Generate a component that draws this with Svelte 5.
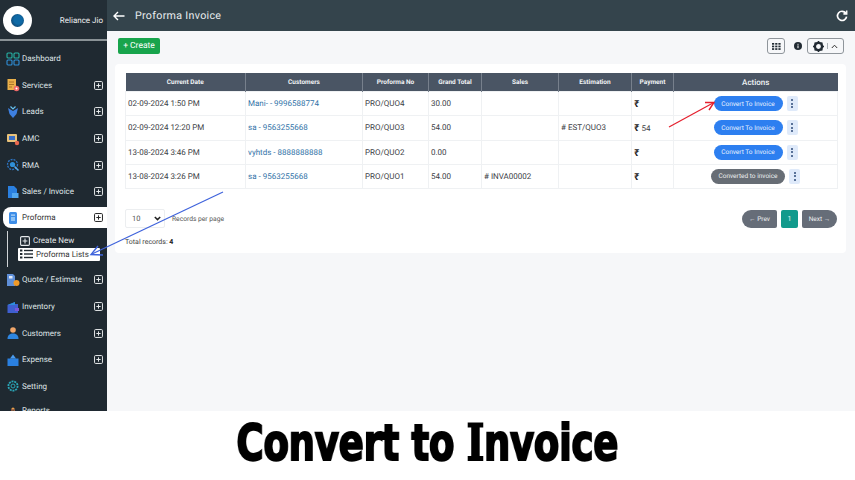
<script>
  const menu = [
    { name: 'Dashboard', icon: 'dash' },
    { name: 'Services', icon: 'services', plus: true },
    { name: 'Leads', icon: 'leads', plus: true },
    { name: 'AMC', icon: 'amc', plus: true },
    { name: 'RMA', icon: 'rma', plus: true },
    { name: 'Sales / Invoice', icon: 'sales', plus: true },
    { name: 'Proforma', icon: 'proforma', plus: true, active: true },
    { name: 'Quote / Estimate', icon: 'quote', plus: true },
    { name: 'Inventory', icon: 'inventory', plus: true },
    { name: 'Customers', icon: 'customers', plus: true },
    { name: 'Expense', icon: 'expense', plus: true },
    { name: 'Setting', icon: 'setting' },
    { name: 'Reports', icon: 'reports' }
  ];

  const cols = ['Current Date', 'Customers', 'Proforma No', 'Grand Total', 'Sales', 'Estimation', 'Payment', 'Actions'];

  const rows = [
    { date: '02-09-2024 1:50 PM', customer: 'Mani- - 9996588774', no: 'PRO/QUO4', total: '30.00', sales: '', est: '', pay: '' },
    { date: '02-09-2024 12:20 PM', customer: 'sa - 9563255668', no: 'PRO/QUO3', total: '54.00', sales: '', est: '# EST/QUO3', pay: '54' },
    { date: '13-08-2024 3:46 PM', customer: 'vyhtds - 8888888888', no: 'PRO/QUO2', total: '0.00', sales: '', est: '', pay: '' },
    { date: '13-08-2024 3:26 PM', customer: 'sa - 9563255668', no: 'PRO/QUO1', total: '54.00', sales: '# INVA00002', est: '', pay: '', done: true }
  ];
</script>

{#snippet plusBox(size)}
  <svg class="plus" width={size} height={size} viewBox="0 0 10 10" fill="none" stroke="currentColor">
    <rect x="0.6" y="0.6" width="8.8" height="8.8" rx="1.2" stroke-width="1.1" />
    <path d="M5 2.6v4.8M2.6 5h4.8" stroke-width="1.1" />
  </svg>
{/snippet}

{#snippet menuIcon(kind)}
  <svg class="micon" width="14" height="14" viewBox="0 0 14 14" fill="none">
    {#if kind === 'dash'}
      <g stroke="#27b3a6" stroke-width="1.1">
        <rect x="1" y="1" width="5" height="5" rx="1" />
        <rect x="8" y="1" width="5" height="5" rx="1" />
        <rect x="1" y="8" width="5" height="5" rx="1" stroke="#2f8fd8" />
        <rect x="8" y="8" width="5" height="5" rx="1" stroke="#2f8fd8" />
      </g>
    {:else if kind === 'services'}
      <rect x="1.5" y="1" width="8.5" height="11" fill="#e9b04a" />
      <path d="M3 4h5M3 6.5h5M3 9h3" stroke="#a8742a" />
      <circle cx="10.5" cy="10.5" r="2.8" fill="#ee6a6a" />
      <circle cx="10.5" cy="10.5" r="1" fill="#fff" />
    {:else if kind === 'leads'}
      <path d="M2 3l5 3 5-3-1.5 6L7 13 3.5 9z" fill="#3d7fe0" />
      <path d="M4.5 1.5L7 4l2.5-2.5" stroke="#67c1f0" stroke-width="1.2" />
    {:else if kind === 'amc'}
      <rect x="1" y="2" width="10" height="8" rx="1" fill="#e8c27a" />
      <rect x="3" y="4" width="6" height="4" fill="#3a70c8" />
      <circle cx="11" cy="11" r="2.2" fill="#e8684f" />
    {:else if kind === 'rma'}
      <circle cx="6.5" cy="6.5" r="5" stroke="#2d75c4" stroke-width="1.3" stroke-dasharray="2 1" />
      <circle cx="6.5" cy="6.5" r="2.6" fill="#2f8fd8" />
      <path d="M8.5 8.5l4 4" stroke="#5aa9ea" stroke-width="1.6" />
    {:else if kind === 'sales'}
      <path d="M2 1h6l3 3v9H2z" fill="#2a80e0" />
      <rect x="6" y="8" width="6.5" height="5" fill="#52a8f0" />
    {:else if kind === 'proforma'}
      <rect x="3" y="1" width="8" height="12" rx="1.5" fill="#3e8ee8" />
      <rect x="5" y="3.5" width="4" height="1.2" fill="#bcdcf8" />
      <rect x="5" y="6" width="4" height="4" fill="#8ec2f4" />
    {:else if kind === 'quote'}
      <path d="M1 1h6l2 2v10H1z" fill="#5f8fd8" />
      <rect x="3" y="3" width="3.5" height="2.5" fill="#dfe9f8" />
      <circle cx="10.5" cy="10" r="3" fill="#f09a28" />
    {:else if kind === 'inventory'}
      <path d="M1.5 5L9 2v2h3v9H1.5z" fill="#3f5fd0" />
      <path d="M1.5 5L9 2v3z" fill="#2c8ed8" />
      <rect x="9" y="8" width="4" height="3" fill="#7a56d8" />
    {:else if kind === 'customers'}
      <circle cx="7" cy="4" r="2.8" fill="#f0a66a" />
      <path d="M1.5 13c0-4 2.5-5.500 5.500-5.500s5.500 1.500 5.500 5.500z" fill="#2f86e0" />
    {:else if kind === 'expense'}
      <path d="M1.5 5.500h11V13h-11z" fill="#2a80e0" />
      <path d="M4 5.500L7 1.500l3 4z" fill="#4a9cf0" />
    {:else if kind === 'setting'}
      <circle cx="7" cy="7" r="4.6" stroke="#2aa7b8" stroke-width="1.8" stroke-dasharray="2 0.8" />
      <circle cx="7" cy="7" r="2" stroke="#2aa7b8" stroke-width="1" />
    {:else}
      <circle cx="3" cy="10" r="1.6" fill="#e8734a" />
      <circle cx="7" cy="5" r="1.6" fill="#e8a04a" />
      <circle cx="11" cy="9" r="1.6" fill="#d8504a" />
      <path d="M3 10l4-5 4 4" stroke="#a8604a" />
    {/if}
  </svg>
{/snippet}

<div class="frame">
  <div class="app">
    <aside class="side">
      <div class="brand">
        <div class="logo"><span class="logo-dot"></span></div>
        <span class="brand-name">Reliance Jio</span>
      </div>
      <nav class="menu">
        {#each menu as item}
          <div class="item" class:active={item.active}>
            {@render menuIcon(item.icon)}
            <span class="label">{item.name}</span>
            {#if item.plus}{@render plusBox(9)}{/if}
          </div>
          {#if item.active}
            <div class="sub">
              <div class="sub-row">
                {@render plusBox(10)}
                <span>Create New</span>
              </div>
              <div class="sub-row current">
                <svg width="13" height="10" viewBox="0 0 13 10" fill="#20282f">
                  <rect x="0" y="0.5" width="2.4" height="2" />
                  <rect x="0" y="4" width="2.4" height="2" />
                  <rect x="0" y="7.5" width="2.4" height="2" />
                  <rect x="4" y="0.8" width="9" height="1.4" />
                  <rect x="4" y="4.3" width="9" height="1.4" />
                  <rect x="4" y="7.8" width="9" height="1.4" />
                </svg>
                <span>Proforma Lists</span>
              </div>
            </div>
          {/if}
        {/each}
      </nav>
    </aside>

    <main class="main">
      <header class="top">
        <svg width="12" height="10" viewBox="0 0 12 10" fill="none" stroke="#fff" stroke-width="1.4">
          <path d="M11.5 5H1M5 1L1 5l4 4" />
        </svg>
        <h1>Proforma Invoice</h1>
        <svg class="refresh" width="12" height="12" viewBox="0 0 12 12" fill="none" stroke="#fff" stroke-width="1.7">
          <path d="M9.8 3.2A4.6 4.6 0 1 0 10.6 6.6" />
          <path d="M10.8 0.6v3.4H7.4" stroke-width="1.3" fill="#fff" />
        </svg>
      </header>

      <div class="body">
        <div class="tools">
          <button class="create">+ Create</button>
          <div class="tools-right">
            <button class="tool grid-btn" aria-label="grid">
              <svg width="9" height="7" viewBox="0 0 9 7" fill="#222b33">
                {#each [0, 3.2, 6.4] as x}
                  {#each [0, 2.6, 5.2] as y}
                    <rect {x} {y} width="2.2" height="1.7" />
                  {/each}
                {/each}
              </svg>
            </button>
            <svg class="info" width="8" height="8" viewBox="0 0 8 8">
              <circle cx="4" cy="4" r="4" fill="#222b33" />
              <rect x="3.5" y="3.4" width="1" height="2.8" fill="#fff" />
              <rect x="3.5" y="1.8" width="1" height="1" fill="#fff" />
            </svg>
            <button class="tool gear-btn" aria-label="settings">
              <svg width="11" height="11" viewBox="0 0 11 11">
                <circle cx="5.500" cy="5.500" r="3.6" fill="none" stroke="#222b33" stroke-width="2.4" />
                <path d="M5.500 0v11M0 5.500h11M1.600 1.600l7.800 7.800M9.400 1.600L1.600 9.400" stroke="#222b33" stroke-width="1.5" stroke-dasharray="1.7 7.6 1.7 0" />
              </svg>
              <span class="sep"></span>
              <svg width="7" height="5" viewBox="0 0 7 5" fill="none" stroke="#333" stroke-width="1">
                <path d="M0.8 4L3.500 1.200 6.200 4" />
              </svg>
            </button>
          </div>
        </div>

        <section class="card">
          <table>
            <colgroup>
              <col style="width:120px" /><col style="width:117px" /><col style="width:66px" /><col style="width:53px" />
              <col style="width:77px" /><col style="width:73px" /><col style="width:42px" /><col style="width:164px" />
            </colgroup>
            <thead>
              <tr>
                {#each cols as c}
                  <th class:big={c === 'Actions'}>{c}</th>
                {/each}
              </tr>
            </thead>
            <tbody>
              {#each rows as r}
                <tr>
                  <td>{r.date}</td>
                  <td class="link">{r.customer}</td>
                  <td>{r.no}</td>
                  <td>{r.total}</td>
                  <td>{r.sales}</td>
                  <td>{r.est}</td>
                  <td><b class="rupee">₹</b>{r.pay ? ' ' + r.pay : ''}</td>
                  <td>
                    <div class="acts">
                      <button class="pill" class:done={r.done}>{r.done ? 'Converted to invoice' : 'Convert To Invoice'}</button>
                      <button class="kebab" aria-label="more"><i></i><i></i><i></i></button>
                    </div>
                  </td>
                </tr>
              {/each}
            </tbody>
          </table>

          <div class="foot">
            <div>
              <div class="per">
                <div class="select">
                  <span>10</span>
                  <svg width="7" height="5" viewBox="0 0 7 5" fill="none" stroke="#222" stroke-width="1.5"><path d="M0.8 1l2.700 2.600L6.200 1" /></svg>
                </div>
                <span>Records per page</span>
              </div>
              <div class="total">Total records: <b>4</b></div>
            </div>
            <div class="pager">
              <button class="nav">← Prev</button>
              <button class="cur">1</button>
              <button class="nav">Next →</button>
            </div>
          </div>
        </section>
      </div>
    </main>

    <svg class="marks" width="855" height="411" viewBox="0 0 855 411" fill="none">
      <path d="M223 192L92 254" stroke="#3f63dc" stroke-width="1.2" />
      <path d="M98 246L91 254.500L103 255" stroke="#3f63dc" stroke-width="1.4" />
      <path d="M669 127L713 103" stroke="#e5202e" stroke-width="1.2" />
      <path d="M705 102.500L714 102.500L709 110" stroke="#e5202e" stroke-width="1.4" />
    </svg>
  </div>

  <div class="caption"><span class="caption-text">Convert to <span class="slab">I</span>nvoice</span></div>
</div>

<style>
  :global(body) {
    margin: 0;
    background: #fff;
  }
  .frame {
    width: 855px;
    height: 480px;
    overflow: hidden;
    display: flex;
    flex-direction: column;
    font-family: Roboto, "Liberation Sans", sans-serif;
    color: #333;
    text-rendering: geometricPrecision;
  }
  .app {
    position: relative;
    height: 411px;
    flex: none;
    display: flex;
    overflow: hidden;
    background: #f6f7f9;
  }
  .marks {
    position: absolute;
    left: 0;
    top: 0;
    pointer-events: none;
  }
  button {
    font-family: inherit;
    text-rendering: inherit;
    border: 0;
    padding: 0;
    margin: 0;
  }

  /* sidebar */
  .side {
    width: 107px;
    flex: none;
    background: #1f2931;
    color: #e4e8ea;
  }
  .brand {
    height: 41px;
    box-sizing: border-box;
    border-bottom: 2px solid #8a9296;
    display: flex;
    align-items: center;
    justify-content: space-between;
    padding: 1px 4px 0 3px;
    background: #232e36;
  }
  .logo {
    width: 29px;
    height: 29px;
    border-radius: 50%;
    background: #fff;
    display: flex;
    align-items: center;
    justify-content: center;
  }
  .logo-dot {
    width: 13px;
    height: 13px;
    border-radius: 50%;
    background: radial-gradient(circle at 55% 45%, #0f6aa6 0 40%, #12304f 100%);
  }
  .brand-name {
    font-size: 8px;
    color: #eef0f1;
  }
  .menu {
    padding-top: 4.500px;
  }
  .item {
    height: 26.6px;
    display: flex;
    align-items: center;
    padding: 0 4px 0 6px;
    gap: 2px;
    font-size: 8px;
    box-sizing: border-box;
    color: #dfe4e6;
  }
  .item:last-child {
    margin-top: -2px;
  }
  .micon {
    flex: none;
  }
  .label {
    flex: 1;
    white-space: nowrap;
  }
  .item .plus {
    color: #e6e9ea;
    flex: none;
  }
  .item.active {
    height: 21px;
    margin: 2px 0 3.600px 3px;
    padding-left: 3px;
    background: #fff;
    color: #333;
    border-radius: 8px 0 0 8px;
  }
  .item.active .plus {
    color: #222;
  }
  .sub {
    margin-left: 7px;
    margin-top: -1px;
    height: 36px;
    padding: 4px 9px 0 11px;
    box-sizing: border-box;
    border-left: 1.5px solid #cfd3d6;
    font-size: 8px;
  }
  .sub-row {
    display: flex;
    align-items: center;
    gap: 3px;
    height: 12px;
    color: #e4e8ea;
    margin-left: 1px;
  }
  .sub-row.current {
    background: #fff;
    color: #333;
    margin: 1px 0 0 -1px;
    padding: 0 0 0 2px;
    height: 13px;
    width: 80px;
    border-radius: 1px;
    white-space: nowrap;
  }

  /* main */
  .main {
    flex: 1;
    min-width: 0;
    display: flex;
    flex-direction: column;
  }
  .top {
    height: 31px;
    flex: none;
    background: #34444c;
    display: flex;
    align-items: center;
    padding: 0 7px 0 6px;
    box-sizing: border-box;
  }
  .top h1 {
    margin: 0 0 0 10px;
    font-size: 10.7px;
    font-weight: 400;
    letter-spacing: 0.3px;
    color: #e8ecee;
    flex: 1;
  }
  .body {
    padding: 7px 9px 0 8px;
  }
  .tools {
    height: 16px;
    padding: 0 2px 0 3px;
    display: flex;
    align-items: center;
    justify-content: space-between;
  }
  .create {
    width: 42px;
    height: 16px;
    border-radius: 2px;
    background: #18a44c;
    color: #fff;
    font-size: 8.500px;
  }
  .tools-right {
    display: flex;
    align-items: center;
  }
  .tool {
    height: 16px;
    box-sizing: border-box;
    border: 1px solid #8f959b;
    border-radius: 3px;
    background: #f6f7f9;
    display: flex;
    align-items: center;
    justify-content: center;
  }
  .grid-btn {
    width: 18px;
  }
  .info {
    margin: 0 5px 0 9px;
  }
  .gear-btn {
    width: 37px;
    gap: 3px;
  }
  .sep {
    width: 1px;
    height: 6px;
    background: #aab0b5;
  }

  .card {
    margin-top: 10px;
    background: #fff;
    border-radius: 4px;
    padding: 9px 9px 0 10px;
    height: 189px;
    box-sizing: border-box;
  }
  table {
    width: 712px;
    table-layout: fixed;
    border-collapse: collapse;
    font-size: 8px;
  }
  th {
    height: 18px;
    padding: 0;
    background: #4a5564;
    color: #f1f3f5;
    font-size: 6.5px;
    font-weight: 700;
    border-right: 1px solid #77808c;
    text-align: center;
  }
  th:last-child {
    border-right: 0;
  }
  th.big {
    font-size: 8px;
    font-weight: 500;
  }
  td {
    height: 24.25px;
    box-sizing: border-box;
    padding: 0 2px;
    border: 1px solid #eff1f3;
    color: #3c4146;
    white-space: nowrap;
  }
  td.link {
    color: #3273a8;
  }
  .rupee {
    font-family: "Noto Sans", "DejaVu Sans", sans-serif;
    font-size: 9.500px;
    font-weight: 700;
    color: #222;
  }
  .acts {
    display: flex;
    align-items: center;
    justify-content: center;
    gap: 4px;
  }
  .pill {
    width: 69px;
    height: 15px;
    border-radius: 8px;
    background: #2d7ff0;
    color: #e8f1fe;
    font-size: 6.500px;
    white-space: nowrap;
  }
  .pill.done {
    width: 74px;
    background: #676d75;
    color: #eceef0;
  }
  .kebab {
    width: 11px;
    height: 15px;
    border-radius: 2px;
    background: #dfeafa;
    display: flex;
    flex-direction: column;
    align-items: center;
    justify-content: center;
    gap: 1.500px;
  }
  .kebab i {
    width: 2px;
    height: 2px;
    border-radius: 50%;
    background: #2c4a78;
  }
  .foot {
    display: flex;
    justify-content: space-between;
    margin-top: 20px;
  }
  .per {
    display: flex;
    align-items: center;
    gap: 7px;
    font-size: 6.700px;
    color: #555;
  }
  .select {
    width: 40px;
    height: 19px;
    box-sizing: border-box;
    border: 1px solid #eceef0;
    border-radius: 2px;
    display: flex;
    align-items: center;
    justify-content: space-between;
    padding: 0 3px 0 6px;
    font-size: 7.5px;
  }
  .total {
    margin-top: 10px;
    font-size: 7px;
    color: #444;
  }
  .total b {
    color: #222;
  }
  .pager {
    display: flex;
    gap: 4px;
    margin-top: 1px;
    height: 18px;
  }
  .nav {
    width: 35px;
    height: 18px;
    background: #666d78;
    color: #eef0f2;
    font-size: 6.5px;
    border-radius: 9px 2px 2px 9px;
  }
  .nav:last-child {
    border-radius: 2px 9px 9px 2px;
  }
  .cur {
    width: 17px;
    height: 18px;
    background: #129a8c;
    color: #e8f6f4;
    font-size: 7px;
    border-radius: 2px;
  }

  .caption {
    flex: 1;
    display: flex;
    justify-content: center;
    align-items: center;
    font-family: "DejaVu Sans", sans-serif;
    font-weight: 700;
    font-size: 50px;
    color: #000;
    white-space: nowrap;
  }
  .caption-text {
    display: block;
    transform: scaleX(0.745);
    will-change: transform;
    letter-spacing: -0.5px;
    -webkit-text-stroke: 2px #000;
    margin-top: -6px;
  }
  .slab {
    font-family: "DejaVu Serif", serif;
  }
</style>
